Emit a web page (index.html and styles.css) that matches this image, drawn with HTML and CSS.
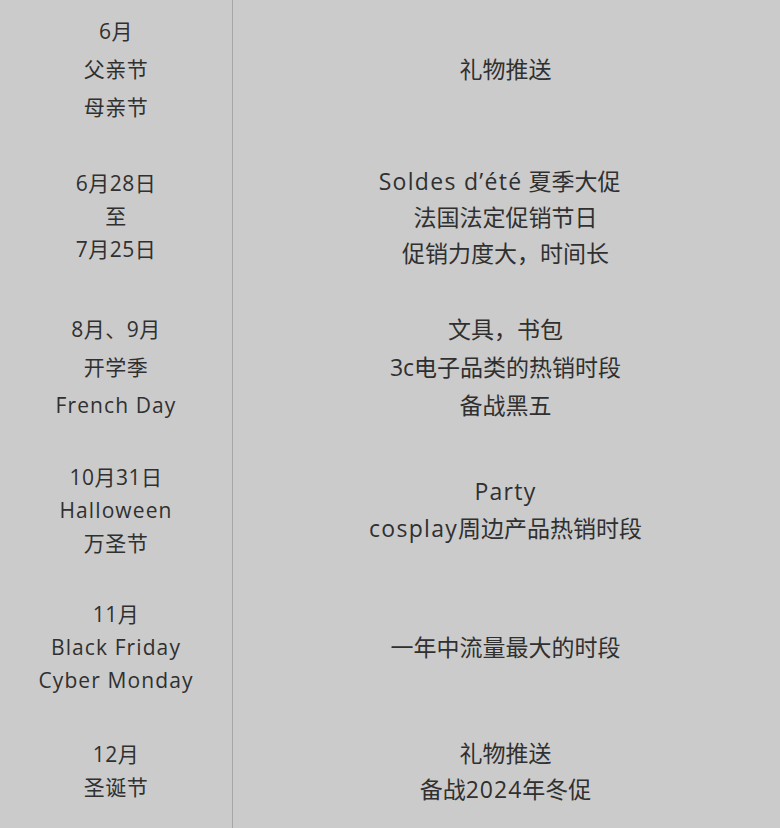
FILE: index.html
```html
<!DOCTYPE html>
<html lang="zh-CN">
<head>
<meta charset="utf-8">
<title>节日营销日历</title>
<link rel="stylesheet" href="styles.css">
</head>
<body>
<div class="table">
  <div class="cell left r1 lh38"><div>6月</div><div>父亲节</div><div>母亲节</div></div>
  <div class="cell right r1"><div>礼物推送</div></div>

  <div class="cell left r2 lh33"><div>6月28日</div><div>至</div><div>7月25日</div></div>
  <div class="cell right r2 lh36"><div class="pre"><span class="lat">Soldes d’été</span> 夏季大促  </div><div>法国法定促销节日</div><div>促销力度大，时间长</div></div>

  <div class="cell left r3 lh38"><div>8月、9月</div><div>开学季</div><div><span class="lat">French Day</span></div></div>
  <div class="cell right r3 lh38"><div>文具，书包</div><div>3c电子品类的热销时段</div><div>备战黑五</div></div>

  <div class="cell left r4 lh33"><div>10月31日</div><div><span class="lat">Halloween</span></div><div>万圣节</div></div>
  <div class="cell right r4 lh37"><div><span class="lat">Party</span></div><div><span class="lat">cosplay</span>周边产品热销时段</div></div>

  <div class="cell left r5 lh33"><div>11月</div><div><span class="lat">Black Friday</span></div><div><span class="lat">Cyber Monday</span></div></div>
  <div class="cell right r5"><div>一年中流量最大的时段</div></div>

  <div class="cell left r6 lh33"><div>12月</div><div>圣诞节</div></div>
  <div class="cell right r6 lh36"><div>礼物推送</div><div>备战<span class="num">2024</span>年冬促</div></div>
</div>
</body>
</html>
```

FILE: styles.css
```css
html, body {
  margin: 0;
  padding: 0;
  background: #cbcbcb;
}
body {
  font-family: "Open Sans", "Noto Sans CJK SC", sans-serif;
  color: #303030;
  overflow: hidden;
}
.table {
  display: grid;
  grid-template-columns: 233px 1fr;
  grid-template-rows: 138px 157px 144px 142px 132px 116px;
  width: 780px;
  height: 828px;
}
.cell {
  display: flex;
  flex-direction: column;
  justify-content: center;
  align-items: center;
  text-align: center;
  white-space: nowrap;
  line-height: 36px;
}
.pre {
  white-space: pre;
}
.left {
  font-size: 21px;
  border-right: 1px solid #a6a6a6;
  letter-spacing: 0.5px;
}
.left .lat {
  letter-spacing: 1.1px;
}
.right {
  font-size: 23px;
  padding-right: 2px;
}
.right .lat {
  letter-spacing: 1.3px;
}
.right .num {
  letter-spacing: 1px;
}
.lh33 { line-height: 33px; }
.lh36 { line-height: 36px; }
.lh37 { line-height: 37px; }
.lh38 { line-height: 38px; }
```
